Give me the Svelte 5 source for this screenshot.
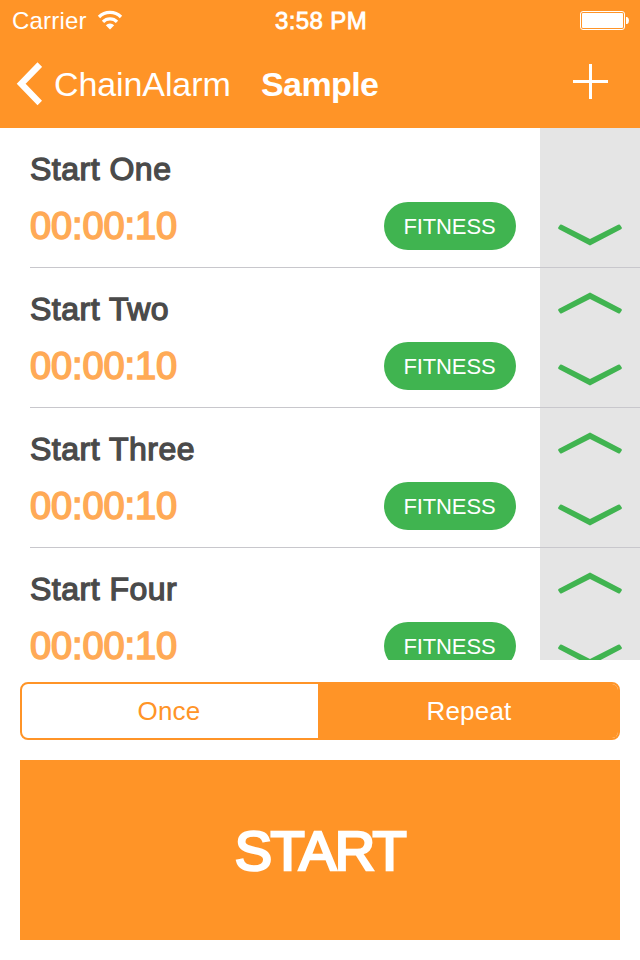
<script lang="ts">
  interface Alarm { name: string; time: string; tag: string; }

  let alarms = $state<Alarm[]>([
    { name: 'Start One', time: '00:00:10', tag: 'FITNESS' },
    { name: 'Start Two', time: '00:00:10', tag: 'FITNESS' },
    { name: 'Start Three', time: '00:00:10', tag: 'FITNESS' },
    { name: 'Start Four', time: '00:00:10', tag: 'FITNESS' }
  ]);
  let mode = $state('Repeat');

  function move(from: number, to: number) {
    const next = [...alarms];
    [next[from], next[to]] = [next[to], next[from]];
    alarms = next;
  }
</script>

<main>
  <header>
    <div class="status">
      <div class="carrier">
        <span>Carrier</span>
        <svg width="26" height="20" viewBox="0 0 26 20" fill="none" stroke="#fff" stroke-width="3.3">
          <path d="M2 7a15.6 15.6 0 0 1 22 0" />
          <path d="M6 11.8a9.9 9.9 0 0 1 14 0" />
          <path d="M13 19.4l-4.2-4.2a6 6 0 0 1 8.4 0z" fill="#fff" stroke="none" />
        </svg>
      </div>
      <span class="clock">3:58 PM</span>
      <svg class="battery" width="50" height="20" viewBox="0 0 50 20">
        <rect x="0.5" y="0.5" width="44" height="18" rx="2.5" fill="none" stroke="#fff" />
        <rect x="2" y="2" width="41" height="15" rx="1" fill="#fff" />
        <path d="M46 6h1.2q1.8 1 1.8 3.5t-1.8 3.5H46z" fill="#fff" />
      </svg>
    </div>
    <nav>
      <button class="back">
        <svg width="26" height="44" viewBox="0 0 26 44" fill="none" stroke="#fff" stroke-width="6.4">
          <path d="M23.8 2.6L5.2 21.8l18.6 19.2" />
        </svg>
        <span>ChainAlarm</span>
      </button>
      <h1>Sample</h1>
      <button class="add" aria-label="Add">
        <svg width="36" height="36" viewBox="0 0 36 36" stroke="#fff" stroke-width="3">
          <path d="M1 18.5h35M18.5 1v35" />
        </svg>
      </button>
    </nav>
  </header>

  <ul>
    {#each alarms as alarm, i}
      <li>
        <div class="info">
          <h2>{alarm.name}</h2>
          <div class="detail">
            <span class="time">{alarm.time}</span>
            <span class="tag">{alarm.tag}</span>
          </div>
        </div>
        <div class="order">
          {#if i > 0}
            <button class="up" aria-label="Move up" onclick={() => move(i, i - 1)}>
              <svg width="66" height="24" viewBox="0 0 66 24"><path d="M1.2 19.6l1.9 2.6q.7.6 1.8.1L33 8.1l28.1 14.2q1.1.5 1.8-.1l1.9-2.6q.4-1.1-.7-1.8L33 1.4 1.9 17.8q-1.1.7-.7 1.8z" /></svg>
            </button>
          {/if}
          <button class="down" aria-label="Move down" onclick={() => move(i, Math.min(i + 1, alarms.length - 1))}>
            <svg width="66" height="24" viewBox="0 0 66 24"><path d="M1.2 4.4l1.9-2.6q.7-.6 1.8-.1L33 15.9 61.1 1.7q1.1-.5 1.8.1l1.9 2.6q.4 1.1-.7 1.8L33 22.6 1.9 6.2q-1.1-.7-.7-1.8z" /></svg>
          </button>
        </div>
      </li>
    {/each}
  </ul>

  <footer>
    <div class="segments">
      {#each ['Once', 'Repeat'] as option}
        <button class:selected={mode === option} onclick={() => (mode = option)}>{option}</button>
      {/each}
    </div>
    <button class="start"><span>START</span></button>
  </footer>
</main>

<style>
  :global(body) { margin: 0; background: #fff; }
  main { width: 640px; height: 960px; display: flex; flex-direction: column; overflow: hidden; font-family: "Liberation Sans", Arial, sans-serif; background: #fff; }
  button { margin: 0; padding: 0; border: 0; background: none; color: inherit; font: inherit; cursor: pointer; }
  svg { display: block; }

  header { height: 128px; background: #ff9427; color: #fff; }
  .status { height: 40px; display: grid; grid-template-columns: 1fr auto 1fr; align-items: center; padding: 0 10px 0 12px; font-size: 24px; }
  .carrier { display: flex; align-items: center; gap: 10px; letter-spacing: 0.2px; line-height: 42px; }
  .carrier svg { margin-top: -3px; }
  .clock { line-height: 42px; letter-spacing: 0.4px; -webkit-text-stroke: 0.8px currentColor; }
  .battery { justify-self: end; }
  nav { height: 88px; display: flex; align-items: center; padding: 0 32px 0 16px; font-size: 34px; }
  .back { display: flex; align-items: center; gap: 12px; width: 245px; letter-spacing: -0.1px; }
  .back span { line-height: 88px; }
  h1 { margin: 0; flex: 1; font-size: 34px; font-weight: bold; line-height: 88px; letter-spacing: -0.6px; }
  .add svg { margin-top: -6px; }

  ul { height: 532px; margin: 0; padding: 0; list-style: none; overflow: hidden; }
  li { display: flex; height: 140px; }
  .info { width: 510px; margin-left: 30px; box-sizing: border-box; border-bottom: 1px solid #c8c7cc; padding: 22px 24px 0 0; }
  h2 { margin: 0; font-size: 32px; line-height: 38px; font-weight: normal; letter-spacing: 0.5px; color: #4a4a4a; -webkit-text-stroke: 1.3px currentColor; }
  .detail { display: flex; align-items: center; justify-content: space-between; margin-top: 14px; }
  .time { font-size: 38px; line-height: 48px; letter-spacing: -0.1px; color: #ffaa56; -webkit-text-stroke: 1.6px currentColor; }
  .tag { width: 132px; height: 48px; border-radius: 24px; background: #40b450; color: #fff; font-size: 22px; line-height: 49px; letter-spacing: -0.1px; text-align: center; text-indent: -1px; }
  .order { width: 100px; box-sizing: border-box; border-bottom: 1px solid #c8c7cc; background: #e5e5e5; display: flex; flex-direction: column; align-items: center; padding: 23px 0 20px; }
  .order path { fill: #40b450; }
  .down { margin-top: auto; }

  footer { padding: 22px 20px 20px; }
  .segments { display: flex; height: 58px; box-sizing: border-box; border: 2px solid #ff9427; border-radius: 8px; overflow: hidden; }
  .segments button { flex: 1; font-size: 26px; color: #ff9427; letter-spacing: 0.2px; text-indent: -2px; }
  .segments .selected { background: #ff9427; color: #fff; flex: 0 0 300px; text-indent: 2px; }
  .start { display: block; width: 600px; height: 180px; margin-top: 20px; background: #ff9427; color: #fff; font-size: 56px; letter-spacing: -1.6px; -webkit-text-stroke: 2.6px currentColor; }
</style>
